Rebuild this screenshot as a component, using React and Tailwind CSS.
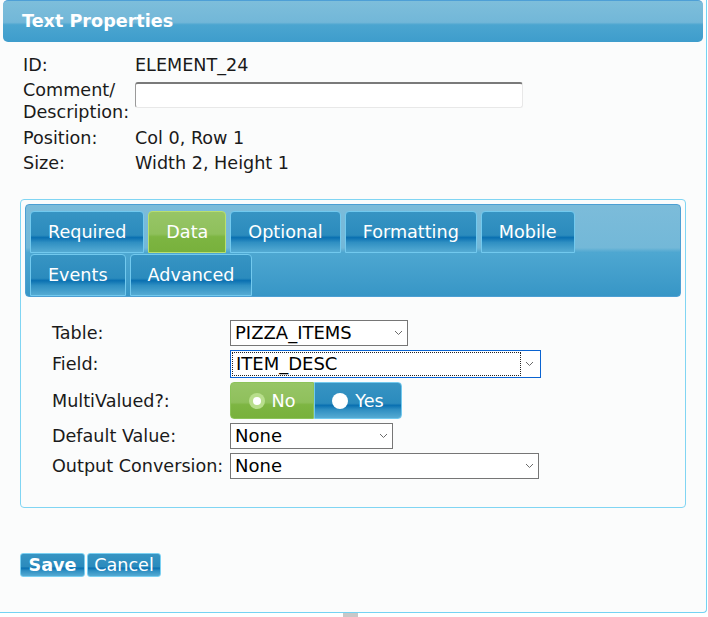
import React from "react";

const tabBlue =
  "bg-[linear-gradient(to_bottom,#3794c3_0%,#2b8bbd_58%,#0a70b1_64%,#2f8fc2_76%,#55abd3_100%)]";
const tabGreen =
  "bg-[linear-gradient(to_bottom,#97c566_0%,#8fc05c_55%,#7db542_62%,#78b13c_100%)]";

const Chevron = () => (
  <svg width="9" height="6" viewBox="0 0 9 6" className="shrink-0">
    <path d="M1 1 L4.5 4.5 L8 1" fill="none" stroke="#6b6b6b" strokeWidth="1" />
  </svg>
);

const Select = ({ value, width }) => (
  <div
    className={`flex items-center justify-between h-[26px] border border-[#767676] bg-white pl-[4px] pr-[4px] ${width}`}
  >
    <span className="leading-none text-[18px] text-black">{value}</span>
    <Chevron />
  </div>
);

const Tab = ({ label, active }) => (
  <div
    className={`h-[42px] flex items-center px-[17px] rounded-t-[4px] border text-white ${
      active ? `${tabGreen} border-[#b9df6f]` : `${tabBlue} border-[#72c9ee]`
    }`}
  >
    {label}
  </div>
);

const FormRow = ({ label, children }) => (
  <div className="flex items-center">
    <div className="w-[178px] shrink-0">{label}</div>
    {children}
  </div>
);

const App = () => {
  return (
    <div className="w-[708px] h-[617px] bg-white font-['DejaVu_Sans',Verdana,sans-serif] text-[17.6px] text-[#1a1a1a] overflow-hidden">
      <div className="w-[707px] h-[613px] bg-[#fbfcfc] border-r border-b border-[#74d3f3] rounded-br-[4px] px-[3px] flex flex-col">
        {/* header */}
        <div className="h-[42px] rounded-[5px] border-t border-[#4e9fd6] bg-[linear-gradient(to_bottom,#7dbedb_0%,#72b7d8_52%,#4ba5d0_58%,#3e9dcc_100%)] flex items-center pl-[19px]">
          <span className="font-bold text-white text-[17.6px] leading-none">Text Properties</span>
        </div>

        {/* info */}
        <div className="pl-[20px] pt-[12px] flex flex-col gap-[3px] leading-[22px]">
          <div className="flex">
            <div className="w-[112px]">ID:</div>
            <div>ELEMENT_24</div>
          </div>
          <div className="flex">
            <div className="w-[112px]">
              Comment/
              <br />
              Description:
            </div>
            <div className="w-[388px] h-[26px] mt-[3px] bg-white border border-[#e8e8e8] border-t-2 border-t-[#7a7a7a] border-l-[#9a9a9a] rounded-[3px]"></div>
          </div>
          <div className="flex mt-[1px]">
            <div className="w-[112px]">Position:</div>
            <div>Col 0, Row 1</div>
          </div>
          <div className="flex">
            <div className="w-[112px]">Size:</div>
            <div>Width 2, Height 1</div>
          </div>
        </div>

        {/* fieldset */}
        <div className="mt-[25px] ml-[17px] w-[666px] h-[309px] border border-[#80d5f3] rounded-[4px] p-[4px]">
          <div className="rounded-[4px] border border-[#4c9fd3] bg-[linear-gradient(to_bottom,#7cbcda_0%,#73b8d8_47%,#4ea7d1_52%,#3796c6_100%)] pt-[6px] px-[4px] flex flex-col gap-[1px]">
            <div className="flex gap-[4px]">
              <Tab label="Required" />
              <Tab label="Data" active />
              <Tab label="Optional" />
              <Tab label="Formatting" />
              <Tab label="Mobile" />
            </div>
            <div className="flex gap-[4px]">
              <Tab label="Events" />
              <Tab label="Advanced" />
            </div>
          </div>

          <div className="pl-[27px] pt-[23px] flex flex-col gap-[4px] leading-[22px]">
            <FormRow label="Table:">
              <Select value="PIZZA_ITEMS" width="w-[178px]" />
            </FormRow>
            <FormRow label="Field:">
              <div className="flex items-center justify-between w-[311px] h-[28px] border border-[#0a63d1] bg-white pr-[6px]">
                <div className="h-[24px] w-[289px] ml-[1px] border border-dotted border-[#222] flex items-center pl-[3px]">
                  <span className="leading-none text-[18px] text-black">ITEM_DESC</span>
                </div>
                <Chevron />
              </div>
            </FormRow>
            <FormRow label="MultiValued?:">
              <div className="flex h-[37px]">
                <div className={`w-[84px] flex items-center justify-center gap-[7px] rounded-l-[4px] border border-[#8cc35a] text-white ${tabGreen}`}>
                  <span className="w-[16px] h-[16px] rounded-full bg-[#b8de8c] flex items-center justify-center">
                    <span className="w-[8px] h-[8px] rounded-full bg-white"></span>
                  </span>
                  No
                </div>
                <div className={`w-[88px] flex items-center justify-center gap-[7px] rounded-r-[4px] border border-[#72c9ee] text-white ${tabBlue}`}>
                  <span className="w-[16px] h-[16px] rounded-full bg-white"></span>
                  Yes
                </div>
              </div>
            </FormRow>
            <FormRow label="Default Value:">
              <Select value="None" width="w-[163px]" />
            </FormRow>
            <FormRow label="Output Conversion:">
              <Select value="None" width="w-[309px]" />
            </FormRow>
          </div>
        </div>

        {/* buttons */}
        <div className="mt-[45px] ml-[17px] flex gap-[2px] h-[24px]">
          <div className={`w-[65px] flex items-center justify-center rounded-[3px] border border-[#7bd0f2] text-white font-bold ${tabBlue}`}>
            Save
          </div>
          <div className={`w-[74px] flex items-center justify-center rounded-[3px] border border-[#7bd0f2] text-white ${tabBlue}`}>
            Cancel
          </div>
        </div>
      </div>
      <div className="flex h-[4px]">
        <div className="ml-[343px] w-[15px] bg-[#c8c8c8]"></div>
      </div>
    </div>
  );
};

export default App;
